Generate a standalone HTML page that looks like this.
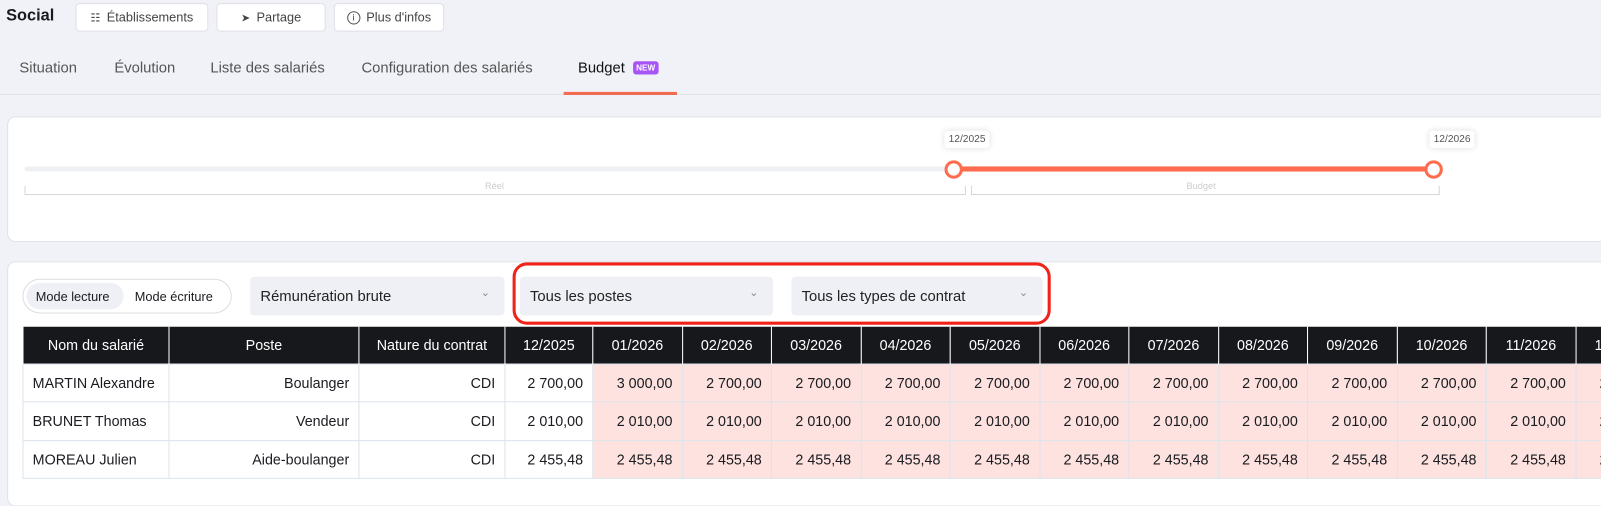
<!DOCTYPE html>
<html><head><meta charset="utf-8"><style>
*{box-sizing:border-box;margin:0;padding:0}
body{width:1601px;height:479px;overflow:hidden;background:#f1f2f7;font-family:"Liberation Sans",sans-serif;color:#1a1b20;position:relative}
#w{position:absolute;left:0;top:0;width:1700px;height:470px;transform:scale(1.0211);transform-origin:0 0}
.abs{position:absolute}
.btn{position:absolute;top:3px;height:28px;background:#fff;border:1px solid #dfe0e6;border-radius:4px;font-size:12.5px;color:#444;display:flex;align-items:center;justify-content:center;gap:6px}
.tab{position:absolute;top:59px;font-size:14.5px;color:#555}
.card{position:absolute;background:#fff;border:1px solid #dfe1e8;border-radius:8px}
.sel{position:absolute;top:271px;height:38px;background:#eff0f5;border-radius:4px;font-size:14.5px;color:#222;padding:12px 0 0 10px}
.sel:after{content:"⌄";position:absolute;right:14px;top:9px;font-size:11px;color:#888}
table{position:absolute;left:22px;top:320px;width:1608px;border-collapse:collapse;font-size:14px;table-layout:fixed;white-space:nowrap}
th{background:#17181c;color:#fff;font-weight:normal;height:36px;border-left:1px solid #fff;text-align:center}
td{height:37.5px;border:1px solid #dde3ec;text-align:right;padding-right:9px;background:#fff}
td.p{background:#fde2df}
td.l{text-align:left;padding-left:9px}
</style></head><body><div id="w">
<div class="abs" style="left:6px;top:7px;font-size:16px;font-weight:bold">Social</div>
<div class="btn" style="left:74px;width:130px"><span style="font-size:11px">☷</span>Établissements</div>
<div class="btn" style="left:212px;width:107px"><span style="font-size:11px">➤</span>Partage</div>
<div class="btn" style="left:327px;width:108px"><span style="display:inline-block;width:13px;height:13px;border:1px solid #555;border-radius:50%;font-size:9px;text-align:center;line-height:11px">i</span>Plus d'infos</div>
<div class="tab" style="left:19px">Situation</div>
<div class="tab" style="left:112px">Évolution</div>
<div class="tab" style="left:206px">Liste des salariés</div>
<div class="tab" style="left:354px">Configuration des salariés</div>
<div class="tab" style="left:566px;color:#111">Budget <span style="display:inline-block;background:#a855f7;color:#fff;font-size:8px;font-weight:bold;padding:2px 3px;border-radius:3px;vertical-align:2px;margin-left:4px">NEW</span></div>
<div class="abs" style="left:0;top:92px;width:1700px;height:1px;background:#e2e3e8"></div>
<div class="abs" style="left:552px;top:90px;width:111px;height:3px;background:#f26a50"></div>

<div class="card" style="left:7px;top:114px;width:1620px;height:123px"></div>
<div class="abs" style="left:24px;top:163px;width:910px;height:5px;background:#eff0f4;border-radius:3px"></div>
<div class="abs" style="left:934px;top:163px;width:470px;height:5px;background:#ff6b4e"></div>
<div class="abs" style="left:925px;top:157px;width:18px;height:18px;border:3px solid #ff6b4e;border-radius:50%;background:#fff"></div>
<div class="abs" style="left:1395px;top:157px;width:18px;height:18px;border:3px solid #ff6b4e;border-radius:50%;background:#fff"></div>
<div class="abs" style="left:925px;top:128px;padding:3px 4px;background:#fff;box-shadow:0 0 6px #ddd;border-radius:3px;font-size:10px;color:#555">12/2025</div>
<div class="abs" style="left:1400px;top:128px;padding:3px 4px;background:#fff;box-shadow:0 0 6px #ddd;border-radius:3px;font-size:10px;color:#555">12/2026</div>
<div class="abs" style="left:24px;top:182px;width:922px;height:9px;border:1px solid #d5d6dc;border-top:none"></div>
<div class="abs" style="left:951px;top:182px;width:459px;height:9px;border:1px solid #d5d6dc;border-top:none"></div>
<div class="abs" style="left:475px;top:177px;font-size:9px;color:#ccc">Réel</div>
<div class="abs" style="left:1162px;top:177px;font-size:9px;color:#ccc">Budget</div>

<div class="card" style="left:7px;top:256px;width:1620px;height:240px"></div>
<div class="abs" style="left:22px;top:273px;width:205px;height:34px;border:1px solid #dcdde3;border-radius:17px"></div>
<div class="abs" style="left:26px;top:277px;width:95px;height:26px;background:#eff0f5;border-radius:13px;font-size:12.5px;padding:7px 0 0 9px">Mode lecture</div>
<div class="abs" style="left:132px;top:284px;font-size:12.5px">Mode écriture</div>
<div class="sel" style="left:245px;width:249px">Rémunération brute</div>
<div class="sel" style="left:509px;width:248px">Tous les postes</div>
<div class="sel" style="left:775px;width:246px">Tous les types de contrat</div>
<div class="abs" style="left:502px;top:257px;width:527px;height:61px;border:3px solid #f0231b;border-radius:14px"></div>

<table>
<colgroup><col style="width:143px"><col style="width:186px"><col style="width:143px"><col style="width:86px"><col span="12" style="width:87.5px"></colgroup>
<tr><th>Nom du salarié</th><th>Poste</th><th>Nature du contrat</th><th>12/2025</th><th>01/2026</th><th>02/2026</th><th>03/2026</th><th>04/2026</th><th>05/2026</th><th>06/2026</th><th>07/2026</th><th>08/2026</th><th>09/2026</th><th>10/2026</th><th>11/2026</th><th>12/2026</th></tr>
<tr><td class="l">MARTIN Alexandre</td><td>Boulanger</td><td>CDI</td><td>2 700,00</td><td class="p">3 000,00</td><td class="p">2 700,00</td><td class="p">2 700,00</td><td class="p">2 700,00</td><td class="p">2 700,00</td><td class="p">2 700,00</td><td class="p">2 700,00</td><td class="p">2 700,00</td><td class="p">2 700,00</td><td class="p">2 700,00</td><td class="p">2 700,00</td><td class="p">2 700,00</td></tr>
<tr><td class="l">BRUNET Thomas</td><td>Vendeur</td><td>CDI</td><td>2 010,00</td><td class="p">2 010,00</td><td class="p">2 010,00</td><td class="p">2 010,00</td><td class="p">2 010,00</td><td class="p">2 010,00</td><td class="p">2 010,00</td><td class="p">2 010,00</td><td class="p">2 010,00</td><td class="p">2 010,00</td><td class="p">2 010,00</td><td class="p">2 010,00</td><td class="p">2 010,00</td></tr>
<tr><td class="l">MOREAU Julien</td><td>Aide-boulanger</td><td>CDI</td><td>2 455,48</td><td class="p">2 455,48</td><td class="p">2 455,48</td><td class="p">2 455,48</td><td class="p">2 455,48</td><td class="p">2 455,48</td><td class="p">2 455,48</td><td class="p">2 455,48</td><td class="p">2 455,48</td><td class="p">2 455,48</td><td class="p">2 455,48</td><td class="p">2 455,48</td><td class="p">2 455,48</td></tr>
</table>
</div></body></html>
